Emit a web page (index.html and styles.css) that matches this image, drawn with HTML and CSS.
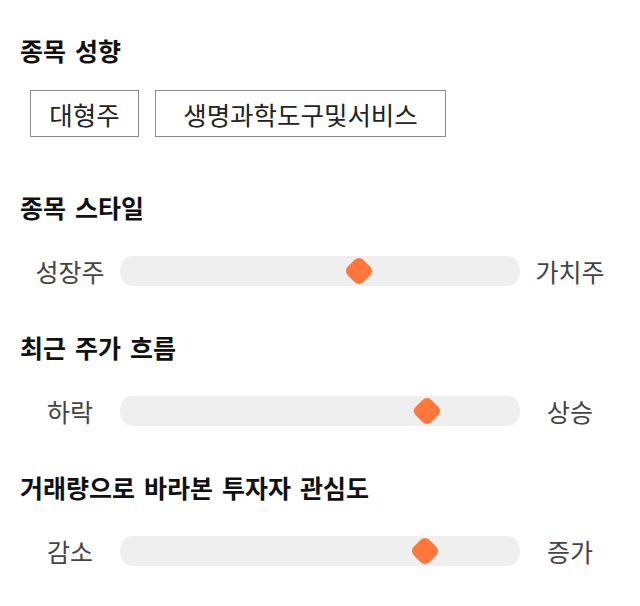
FILE: index.html
```html
<!DOCTYPE html>
<html lang="ko">
<head>
<meta charset="utf-8">
<link rel="stylesheet" href="styles.css">
</head>
<body>
<div class="page">
  <section class="block block-first">
    <h2 class="title">종목 성향</h2>
    <div class="tags">
      <span class="tag tag-short">대형주</span>
      <span class="tag tag-long">생명과학도구및서비스</span>
    </div>
  </section>

  <section class="block block-style">
    <h2 class="title">종목 스타일</h2>
    <div class="slider-row">
      <span class="label">성장주</span>
      <div class="track"><span class="thumb" style="left: 59.7%"></span></div>
      <span class="label">가치주</span>
    </div>
  </section>

  <section class="block">
    <h2 class="title">최근 주가 흐름</h2>
    <div class="slider-row">
      <span class="label">하락</span>
      <div class="track"><span class="thumb" style="left: 76.8%"></span></div>
      <span class="label">상승</span>
    </div>
  </section>

  <section class="block">
    <h2 class="title">거래량으로 바라본 투자자 관심도</h2>
    <div class="slider-row">
      <span class="label">감소</span>
      <div class="track"><span class="thumb" style="left: 76.3%"></span></div>
      <span class="label">증가</span>
    </div>
  </section>
</div>
</body>
</html>
```

FILE: styles.css
```css
* { box-sizing: border-box; }
html, body { margin: 0; padding: 0; background: #fff; }
body {
  font-family: "Noto Sans CJK KR", "Noto Sans", sans-serif;
  color: #111;
}
.page {
  padding: 35px 20px 0 20px;
}
.title {
  margin: 0;
  font-size: 25px;
  font-weight: 700;
  line-height: 30px;
  word-spacing: 2px;
  color: #111;
}
.block { margin-top: 46px; }
.block-first { margin-top: 0; }
.block-style { margin-top: 55px; }

.tags {
  display: flex;
  gap: 16px;
  margin-top: 25px;
  padding-left: 10px;
}
.tag {
  display: inline-flex;
  align-items: center;
  justify-content: center;
  height: 47px;
  border: 1px solid #8a8a8a;
  font-size: 25.5px;
  line-height: 1;
  color: #222;
}
.tag-short { width: 109px; }
.tag-long { width: 291px; }

.slider-row {
  display: flex;
  align-items: center;
  margin-top: 34px;
  height: 30px;
}
.label {
  width: 100px;
  text-align: center;
  font-size: 25px;
  line-height: 30px;
  color: #444;
}
.track {
  position: relative;
  width: 400px;
  height: 30px;
  background: #efefef;
  border-radius: 12px / 15px;
}
.thumb {
  position: absolute;
  top: 50%;
  width: 22px;
  height: 22px;
  background: #ff773d;
  border-radius: 6px;
  transform: translate(-50%, -50%) rotate(45deg);
}
```
